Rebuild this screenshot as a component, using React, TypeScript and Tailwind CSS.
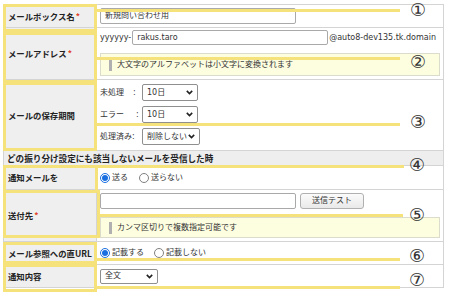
import React from "react";

function Radio({ checked, cls = "" }: { checked?: boolean; cls?: string }) {
  return checked ? (
    <span className={"block w-[10px] h-[10px] rounded-full border border-[#1a6fe0] bg-white flex items-center justify-center shrink-0 " + cls}>
      <span className="block w-[6px] h-[6px] rounded-full bg-[#1a6fe0]" />
    </span>
  ) : (
    <span className={"block w-[10px] h-[10px] rounded-full border border-[#808080] bg-white shrink-0 " + cls} />
  );
}

function Chevron() {
  return (
    <svg width="7" height="5" viewBox="0 0 7 5" className="shrink-0">
      <path d="M0.8 0.9 L3.5 3.6 L6.2 0.9" fill="none" stroke="#222" strokeWidth="1.6" />
    </svg>
  );
}

function Select({ cls, text }: { cls: string; text: string }) {
  return (
    <div className={"border border-[#8f8f8f] rounded-[2px] bg-white flex items-center justify-between pl-[4px] pr-[4px] " + cls}>
      <span className="leading-none">{text}</span>
      <Chevron />
    </div>
  );
}

function Label({ children, req }: { children: React.ReactNode; req?: boolean }) {
  return (
    <div className="w-[93px] shrink-0 bg-[#efefef] border-r border-[#d4d4d4] flex items-center pl-[4px] font-bold text-[8.4px] text-[#222] font-['Noto_Sans_CJK_JP',sans-serif] leading-none">
      <span>{children}</span>
      {req && <span className="text-[#e0452b] ml-[1px]">*</span>}
    </div>
  );
}

function Hint({ text, cls }: { text: string; cls: string }) {
  return (
    <div className={"bg-[#fdfde0] border border-[#dcdccc] flex items-center pl-[8px] " + cls}>
      <span className="block w-[3px] h-[12px] bg-[#b0b0b0] shrink-0" />
      <span className="ml-[5px] leading-none text-[#333]">{text}</span>
    </div>
  );
}

const NUM =
  "absolute w-[18px] h-[20px] flex items-center justify-center text-[18px] leading-[20px] text-[#333] font-['DejaVu_Sans','Noto_Sans_CJK_JP',sans-serif]";

export default function App() {
  return (
    <div className="relative w-[454px] h-[295px] bg-white overflow-hidden text-[8px] text-[#333] font-['DejaVu_Sans','Noto_Sans_CJK_JP',sans-serif]">
      <div className="ml-[3px] mt-[4px] w-[441px] border border-[#d4d4d4]">
        {/* Row 1 */}
        <div className="flex h-[23px] border-b border-[#d4d4d4]">
          <Label req>メールボックス名</Label>
          <div className="flex-1 flex items-center pl-[3px]">
            <div className="w-[196px] h-[16px] border border-[#a9a9a9] rounded-[2px] flex items-center pl-[4px] leading-none">新規問い合わせ用</div>
          </div>
        </div>
        {/* Row 2 */}
        <div className="flex h-[52px] border-b border-[#d4d4d4]">
          <Label req>メールアドレス</Label>
          <div className="flex-1 flex flex-col pl-[3px] pr-[3px] pt-[2px]">
            <div className="flex items-center h-[15px]">
              <span className="leading-none">yyyyyy-</span>
              <div className="w-[196px] h-[15px] border border-[#a9a9a9] rounded-[2px] flex items-center pl-[4px] leading-none ml-[1px]">rakus.taro</div>
              <span className="leading-none ml-[1px]">@auto8-dev135.tk.domain</span>
            </div>
            <Hint cls="mt-[8px] h-[23px]" text="大文字のアルファベットは小文字に変換されます" />
          </div>
        </div>
        {/* Row 3 */}
        <div className="flex h-[71px] border-b border-[#d4d4d4]">
          <Label>メールの保存期間</Label>
          <div className="flex-1 flex flex-col pl-[3px] pt-[4px] gap-[5px]">
            <div className="flex items-center h-[17px]">
              <span className="w-[42px] flex leading-none">
                <span>未処理</span>
                <span className="ml-[9px]">:</span>
              </span>
              <Select cls="w-[56px] h-[17px]" text="10日" />
            </div>
            <div className="flex items-center h-[17px]">
              <span className="w-[42px] flex leading-none">
                <span>エラー</span>
                <span className="ml-[12px]">:</span>
              </span>
              <Select cls="w-[56px] h-[17px]" text="10日" />
            </div>
            <div className="flex items-center h-[17px]">
              <span className="w-[42px] flex leading-none">
                <span>処理済み</span>
                <span>:</span>
              </span>
              <Select cls="w-[58px] h-[17px]" text="削除しない" />
            </div>
          </div>
        </div>
        {/* Header */}
        <div className="flex items-center h-[15px] bg-[#eeeeee] border-b border-[#d4d4d4] pl-[3px] font-bold text-[8.6px] text-[#222] font-['Noto_Sans_CJK_JP',sans-serif] leading-none">
          どの振り分け設定にも該当しないメールを受信した時
        </div>
        {/* Row 4 */}
        <div className="flex h-[24px] border-b border-[#d4d4d4]">
          <Label>通知メールを</Label>
          <div className="flex-1 flex items-center pl-[3px] leading-none">
            <Radio checked />
            <span className="ml-[2px]">送る</span>
            <Radio cls="ml-[11px]" />
            <span className="ml-[2px]">送らない</span>
          </div>
        </div>
        {/* Row 5 */}
        <div className="flex h-[52px] border-b border-[#d4d4d4]">
          <Label req>送付先</Label>
          <div className="flex-1 flex flex-col pl-[3px] pr-[3px] pt-[3px]">
            <div className="flex items-center h-[16px]">
              <div className="w-[196px] h-[16px] border border-[#a9a9a9] rounded-[2px]" />
              <div className="ml-[4px] w-[64px] h-[16px] border border-[#b0b0b0] rounded-[3px] bg-gradient-to-b from-[#fbfbfb] to-[#e9e9e9] flex items-center justify-center leading-none text-[#333]">送信テスト</div>
            </div>
            <Hint cls="mt-[8px] h-[21px]" text="カンマ区切りで複数指定可能です" />
          </div>
        </div>
        {/* Row 6 */}
        <div className="flex h-[23px] border-b border-[#d4d4d4]">
          <Label>メール参照への直URL</Label>
          <div className="flex-1 flex items-center pl-[3px] leading-none">
            <Radio checked />
            <span className="ml-[2px]">記載する</span>
            <Radio cls="ml-[10px]" />
            <span className="ml-[2px]">記載しない</span>
          </div>
        </div>
        {/* Row 7 */}
        <div className="flex h-[22px]">
          <Label>通知内容</Label>
          <div className="flex-1 flex items-center pl-[3px]">
            <Select cls="w-[58px] h-[15px]" text="全文" />
          </div>
        </div>
      </div>

      {/* annotation rectangles */}
      <div className="absolute left-[3px] top-[4px] w-[94px] h-[28px] border-[3px] border-[#f6e27a]" />
      <div className="absolute left-[3px] top-[32px] w-[94px] h-[51px] border-[3px] border-[#f6e27a]" />
      <div className="absolute left-[3px] top-[82px] w-[94px] h-[69px] border-[3px] border-[#f6e27a]" />
      <div className="absolute left-[3px] top-[165px] w-[95px] h-[28px] border-[3px] border-[#f6e27a]" />
      <div className="absolute left-[3px] top-[190px] w-[97px] h-[48px] border-[3px] border-[#f6e27a]" />
      <div className="absolute left-[3px] top-[242px] w-[94px] h-[22px] border-[3px] border-[#f6e27a]" />
      <div className="absolute left-[3px] top-[264px] w-[94px] h-[28px] border-[3px] border-[#f6e27a]" />

      {/* annotation lines */}
      <div className="absolute left-[97px] top-[9px] w-[303px] h-[3px] bg-[#f6e27a]" />
      <div className="absolute left-[97px] top-[57px] w-[303px] h-[3px] bg-[#f6e27a]" />
      <div className="absolute left-[97px] top-[123px] w-[303px] h-[3px] bg-[#f6e27a]" />
      <div className="absolute left-[97px] top-[165px] w-[307px] h-[3px] bg-[#f6e27a]" />
      <div className="absolute left-[97px] top-[214px] w-[306px] h-[3px] bg-[#f6e27a]" />
      <div className="absolute left-[97px] top-[258px] w-[303px] h-[3px] bg-[#f6e27a]" />
      <div className="absolute left-[97px] top-[286px] w-[303px] h-[3px] bg-[#f6e27a]" />

      {/* circled numbers */}
      <div className={NUM + " left-[409px] top-[0px]"}>①</div>
      <div className={NUM + " left-[409px] top-[52px]"}>②</div>
      <div className={NUM + " left-[409px] top-[112px]"}>③</div>
      <div className={NUM + " left-[408px] top-[155px]"}>④</div>
      <div className={NUM + " left-[408px] top-[205px]"}>⑤</div>
      <div className={NUM + " left-[408px] top-[246px]"}>⑥</div>
      <div className={NUM + " left-[408px] top-[270px]"}>⑦</div>
    </div>
  );
}
